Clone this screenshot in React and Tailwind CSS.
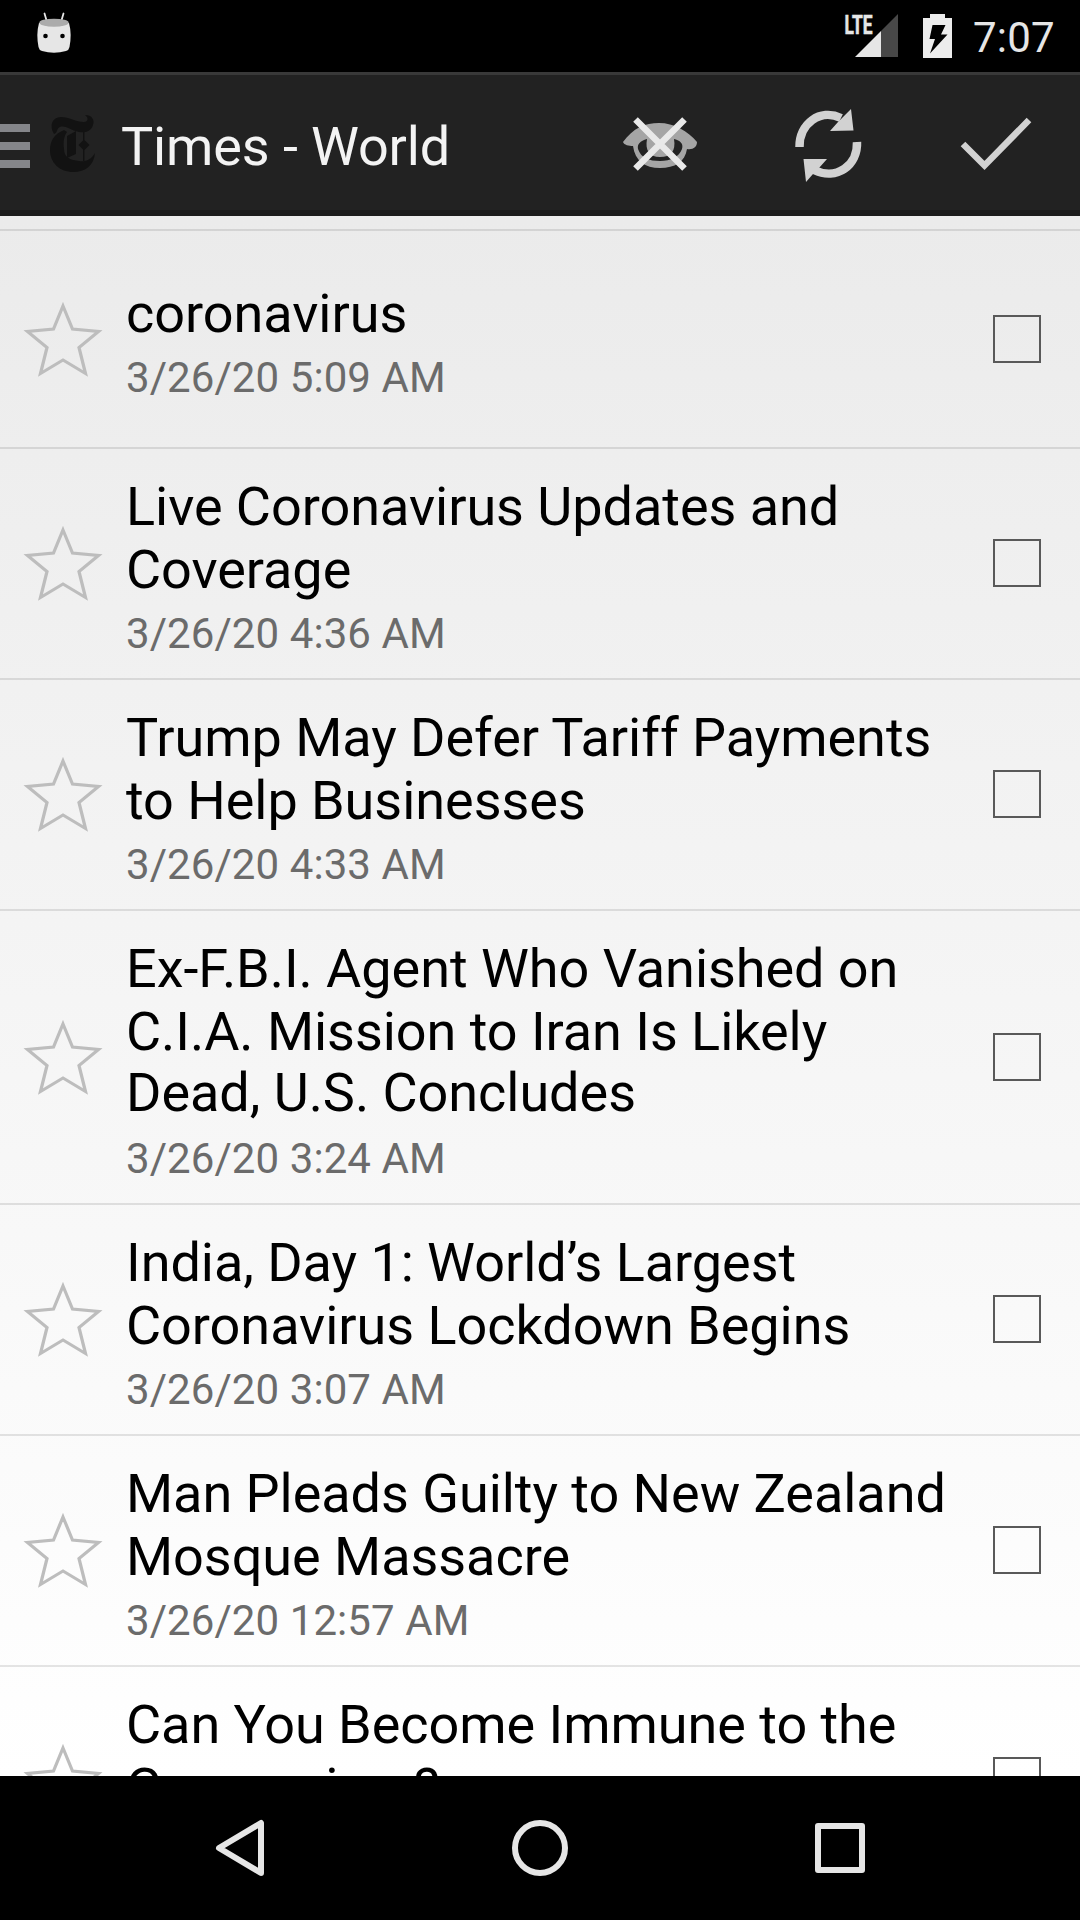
import React from "react";

const articles = [
  { lines: ["coronavirus"], date: "3/26/20 5:09 AM", size: "h-[218px]", inset: "pt-[5px]" },
  { lines: ["Live Coronavirus Updates and", "Coverage"], date: "3/26/20 4:36 AM", size: "h-[231px] pb-px", inset: "pt-[7px]" },
  { lines: ["Trump May Defer Tariff Payments", "to Help Businesses"], date: "3/26/20 4:33 AM", size: "h-[231px] pb-px", inset: "pt-[7px]" },
  { lines: ["Ex-F.B.I. Agent Who Vanished on", "C.I.A. Mission to Iran Is Likely", "Dead, U.S. Concludes"], date: "3/26/20 3:24 AM", size: "h-[294px]", inset: "pt-[5px]" },
  { lines: ["India, Day 1: World’s Largest", "Coronavirus Lockdown Begins"], date: "3/26/20 3:07 AM", size: "h-[231px] pb-px", inset: "pt-[7px]" },
  { lines: ["Man Pleads Guilty to New Zealand", "Mosque Massacre"], date: "3/26/20 12:57 AM", size: "h-[231px] pb-px", inset: "pt-[7px]" },
  { lines: ["Can You Become Immune to the", "Coronavirus?"], date: "", size: "h-[231px] pb-px", inset: "pt-[7px]" },
];

function Star() {
  return (
    <svg className="h-24 w-[126px] shrink-0" viewBox="0 291 126 96" fill="none" stroke="#bdbdbd" strokeWidth="3.2">
      <path d="M63 306 L72.500 329 L98.500 331.500 L79 347.500 L85.500 373.500 L63 360 L40.500 373.500 L47 347.500 L27.500 331.500 L53.500 329 Z" />
    </svg>
  );
}

function Row({ item }) {
  return (
    <li className={`flex shrink-0 items-center border-b-2 border-black/10 ${item.size}`}>
      <Star />
      <div className={`flex-1 whitespace-nowrap ${item.inset}`}>
        <h2 className="text-[54px] leading-[63px] tracking-[-0.04px] text-black">
          {item.lines.map((line, i) => (
            <span key={line} className={i === 2 ? "-mt-0.5 block pb-0.5" : "block"}>{line}</span>
          ))}
        </h2>
        <p className="mt-2 h-[49px] text-[42px] leading-[49px] tracking-[0.08px] text-[#6b6b6b]">{item.date}</p>
      </div>
      <span className="mr-[39px] size-12 shrink-0 border-2 border-[#595959]" />
    </li>
  );
}

function StatusBar() {
  return (
    <div className="flex h-[72px] shrink-0 items-center bg-black">
      <svg className="ml-9 h-[72px] w-9" viewBox="36 0 36 72">
        <path d="M44.5 13.5 L47 22 M63.5 13.5 L61 22" stroke="#e6e6e6" strokeWidth="1.8" strokeLinecap="round" />
        <path d="M39 23 Q36 34 38.5 47 Q39 50 42 51 Q54 54.500 66 51 Q69 50 69.500 47 Q72 34 69 23 Z" fill="#e6e6e6" />
        <ellipse cx="54" cy="22.700" rx="14.700" ry="4" fill="#ababab" />
        <circle cx="45.500" cy="36" r="2.300" />
        <circle cx="62.500" cy="36" r="2.300" />
      </svg>
      <svg className="ml-auto h-[72px] w-[116px]" viewBox="842 0 116 72">
        <text x="844.500" y="33.500" fill="#e6e6e6" stroke="#e6e6e6" strokeWidth="0.600" fontFamily="Roboto, sans-serif" fontWeight="700" fontSize="26" textLength="28" lengthAdjust="spacingAndGlyphs">LTE</text>
        <path d="M898 14 V57 H881 V31 Z" fill="#484848" />
        <path d="M855 57 L881 31 V57 Z" fill="#e6e6e6" />
        <path d="M923 18 H930 V14 H945 V18 H952 V58 H923 Z" fill="#ececec" />
        <path d="M932.500 25 H945.500 L941 34.500 H947.500 L930 53.500 L935 39 H929.500 Z" />
      </svg>
      <span className="mr-6 ml-[15px] w-[83px] pt-1 text-[42px] leading-none tracking-[0.2px] text-[#e6e6e6]">7:07</span>
    </div>
  );
}

function ActionBar() {
  return (
    <header className="flex h-36 shrink-0 items-center border-t-[3px] border-b-[6px] border-t-[#393939] border-b-[#1a1a1a] bg-[#222222]">
      <div className="flex w-[30px] flex-col gap-2.5 pt-[7px]">
        <span className="h-2 bg-[#85868a]" />
        <span className="h-2 bg-[#85868a]" />
        <span className="h-2 bg-[#85868a]" />
      </div>
      <svg className="ml-[14px] h-[135px] w-[60px]" viewBox="44 75 60 135" fill="#121212">
        <path d="M54 134 C49 126 52 117 61 117 C69 117 76 122 84 122 C88 122 89 118 85 115 C92 115 95 120 93 125 C91 132 84 133 79 132 C70 130 65 125 60 127 C56 129 58 133 54 134 Z" />
        <path d="M64 130 C54 134 50 141 50 150 C50 163 60 172 73 172 C86 172 94 165 95 153 C91 160 85 162 79 161 C71 160 64 158 64 149 C63 142 64 136 67 132 Z" />
        <path d="M67 136 L76 131 V154 L67 158 Z M83 130 H84.500 V161 H83 Z M78.500 145 L84 139.500 L89.500 145 L84 150.500 Z" />
      </svg>
      <h1 className="ml-[17px] pt-[7px] text-[54px] leading-[63px] tracking-[-0.12px] text-[#f3f3f3]">Times - World</h1>
      <svg className="ml-auto h-[135px] w-[480px]" viewBox="600 75 480 135" fill="none">
        <path d="M623 142 C633 128 645 123 659 123 C674 123 688 131 697 142 C697 147 693 150 687 149 C685 162 675 168 660 168 C645 168 635 161 633 146 C629 146 624 145 623 142 Z" fill="#a5a5a5" />
        <path d="M647 139 C640 141 637 144 638 149 C641 158 649 161 660 161 C671 161 679 157 682 149 C684 143 679 140 674 139 C676 151 671 157 660 157 C649 157 645 150 647 139 Z" fill="#222222" />
        <path d="M635.500 119.500 L684.500 168.500 M684.500 119.500 L635.500 168.500" stroke="#e9e9e9" strokeWidth="6.500" />
        <path d="M799.500 147 C799 124 820 108 841 118 M857 142 C858 165 837 181 814 170" stroke="#d2d2d2" strokeWidth="8.500" />
        <path d="M851 109 L853.500 130.500 L830 131 L838 122 Z M803.500 159 L827 159 L819 168 L813 174 L806 182 Z" fill="#d2d2d2" />
        <path d="M963 144 L984.500 165.500 L1029 120" stroke="#d2d2d2" strokeWidth="6.500" />
      </svg>
    </header>
  );
}

function NavBar() {
  return (
    <nav className="flex h-36 shrink-0 items-center justify-between bg-black px-[210px]">
      <svg className="size-[60px]" viewBox="0 0 60 60" fill="none" stroke="#e6e6e6" strokeWidth="6" strokeLinejoin="round">
        <path d="M9 30 L51 5 V55 Z" />
      </svg>
      <svg className="size-[60px]" viewBox="0 0 60 60" fill="none" stroke="#e6e6e6" strokeWidth="6">
        <circle cx="30" cy="30" r="25" />
      </svg>
      <svg className="size-[60px]" viewBox="0 0 60 60" fill="none" stroke="#e6e6e6" strokeWidth="6" strokeLinejoin="round">
        <rect x="8" y="8" width="44" height="44" />
      </svg>
    </nav>
  );
}

export default function App() {
  return (
    <div className="flex h-[1920px] w-[1080px] flex-col overflow-hidden bg-black font-['Roboto',sans-serif]">
      <StatusBar />
      <ActionBar />
      <main className="flex-1 overflow-hidden bg-linear-to-b from-[#ebebeb] to-white">
        <ul className="flex flex-col">
          <li className="h-[15px] shrink-0 border-b-2 border-black/10" />
          {articles.map((item) => (
            <Row key={item.lines[0]} item={item} />
          ))}
        </ul>
      </main>
      <NavBar />
    </div>
  );
}
